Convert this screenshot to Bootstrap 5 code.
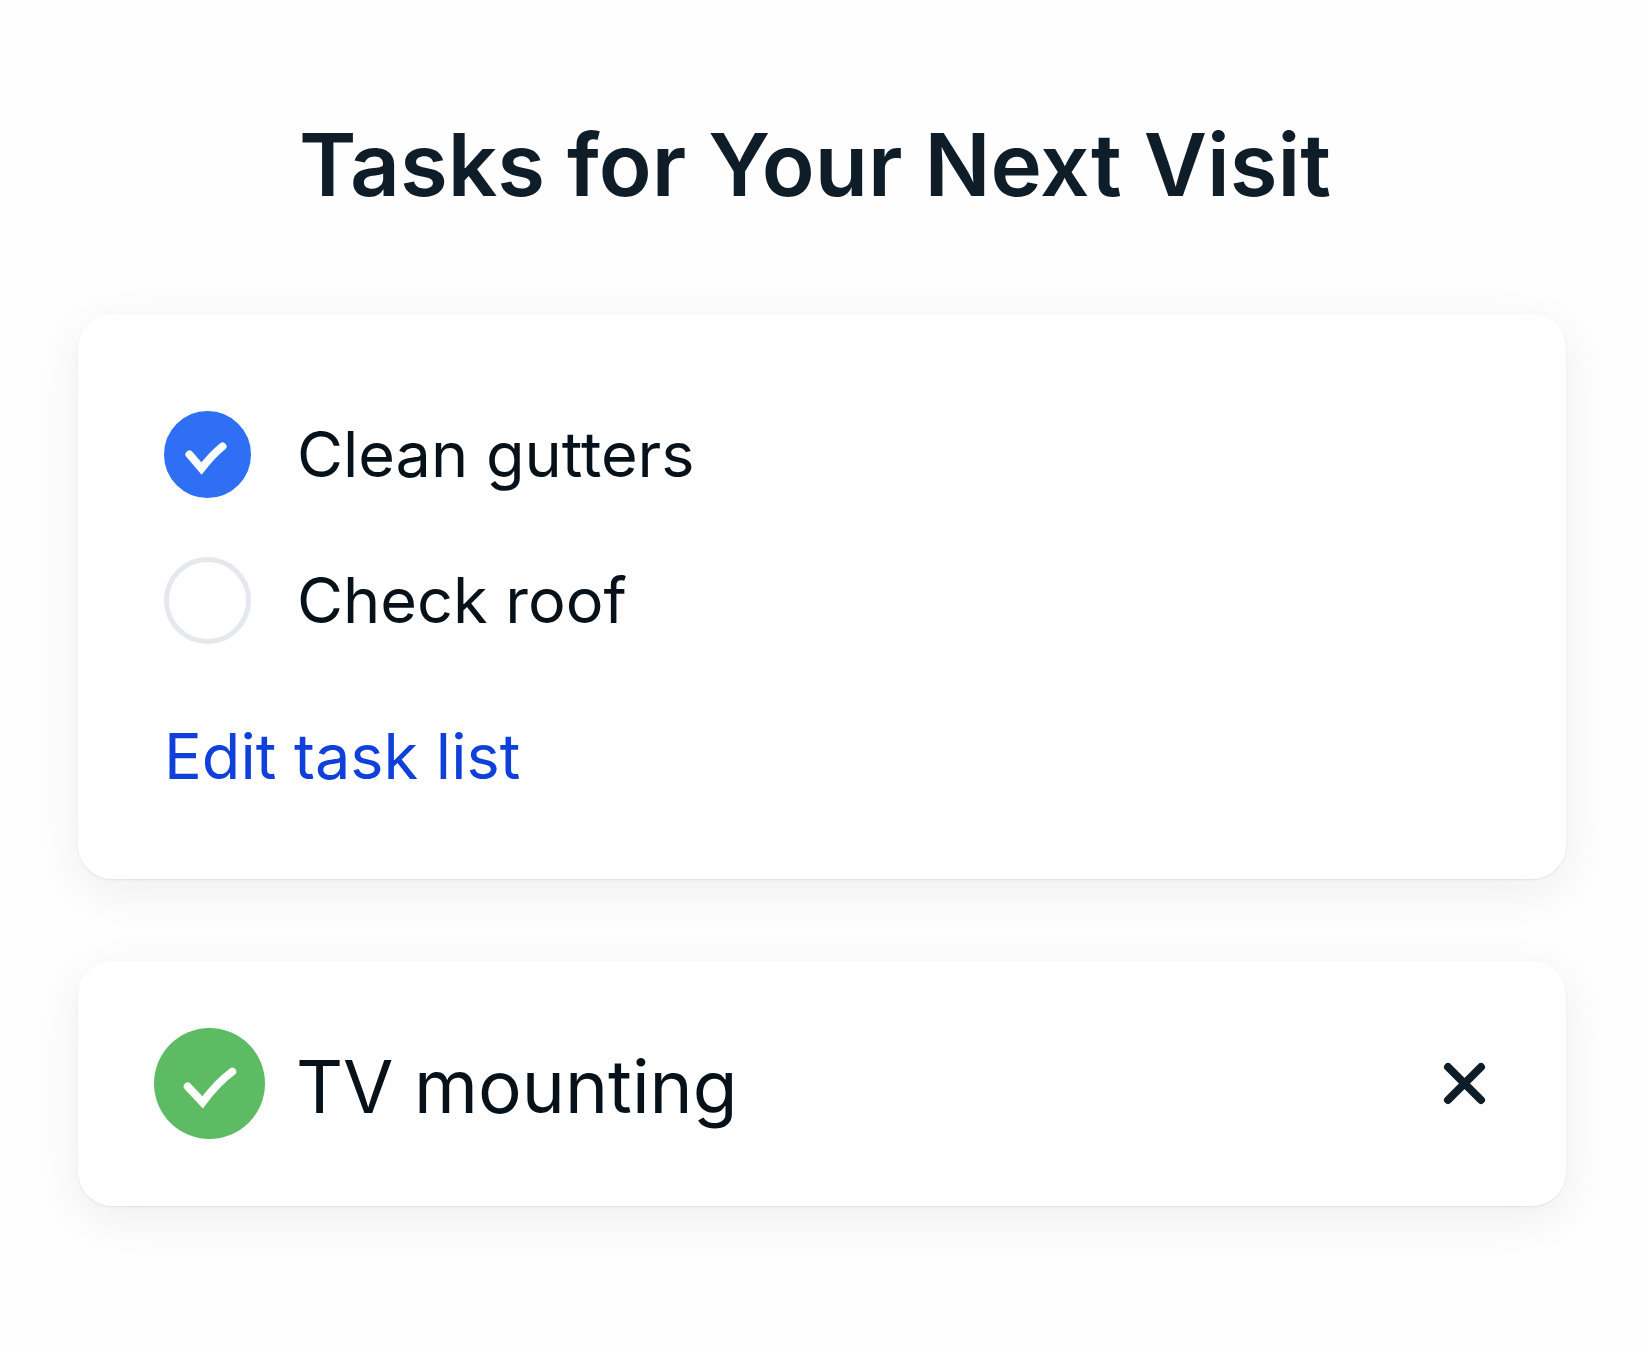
<!DOCTYPE html>
<html lang="en">
<head>
<meta charset="utf-8">
<meta name="viewport" content="width=device-width, initial-scale=1">
<title>Tasks for Your Next Visit</title>
<link href="https://cdn.jsdelivr.net/npm/bootstrap@5.3.0/dist/css/bootstrap.min.css" rel="stylesheet">
<style>
  body { font-family: Inter, "Liberation Sans", sans-serif; color: #07111a; background: #fefefe; }
  .visit-page { padding: 111px 82px 80px 78px; }
  .visit-title { font-size: 87px; line-height: 108px; font-weight: 640; color: #0f1d29; padding-right: 14px; margin-bottom: 95px; }
  .task-card { border: 0; border-radius: 34px; background: #fff;
    box-shadow: 0 1px 2px rgba(15, 23, 42, .08), 0 12px 48px rgba(15, 23, 42, .07); }
  .task-panel { padding: 96px 86px 87px; margin-bottom: 82px; }
  .task-rows { gap: 58px; margin-bottom: 76px; }
  .task-row { gap: 46px; }
  .task-label { font-size: 63px; line-height: 88px; }
  .task-check.form-check-input { width: 87px; height: 87px; margin: 0; border: 5px solid #e5e8ec; background-size: 88px 88px; background-position: center; }
  .task-check.form-check-input:checked { border-color: #2e6ff6; background-color: #2e6ff6;
    background-image: url("data:image/svg+xml,%3Csvg xmlns='http://www.w3.org/2000/svg' viewBox='0 0 88 88'%3E%3Cpath d='M26 44L38 58Q49 44 59 36' fill='none' stroke='%23fff' stroke-width='8' stroke-linecap='round' stroke-linejoin='miter'/%3E%3C/svg%3E"); }
  .edit-link { font-size: 63px; line-height: 72px; color: #1040da; }
  .done-card { padding: 67px 76px; }
  .done-row { gap: 31px; }
  .done-label { font-size: 73px; line-height: 88px; padding-top: 6px; }
  .close-btn { width: 50px; height: 50px; color: #0f1d29; }
</style>
</head>
<body>
<main class="visit-page">
  <h1 class="visit-title text-center">Tasks for Your Next Visit</h1>

  <section class="card task-card task-panel">
    <div class="task-rows d-flex flex-column">
      <div class="task-row d-flex align-items-center">
        <input class="form-check-input task-check rounded-circle flex-shrink-0" type="checkbox" id="gutters" checked>
        <label class="task-label" for="gutters">Clean gutters</label>
      </div>
      <div class="task-row d-flex align-items-center">
        <input class="form-check-input task-check rounded-circle flex-shrink-0" type="checkbox" id="roof">
        <label class="task-label" for="roof">Check roof</label>
      </div>
    </div>
    <a class="edit-link text-decoration-none align-self-start" href="#">Edit task list</a>
  </section>

  <section class="card task-card done-card">
    <div class="done-row d-flex align-items-center">
      <svg class="flex-shrink-0" width="111" height="111" viewBox="0 0 112 112" aria-hidden="true">
        <circle cx="56" cy="56" r="56" fill="#5dbb63"/>
        <path d="M34 59L49 75Q64 55 79 44" fill="none" stroke="#fff" stroke-width="8" stroke-linecap="round"/>
      </svg>
      <span class="done-label">TV mounting</span>
      <button class="close-btn btn p-0 border-0 ms-auto d-flex" type="button" aria-label="Remove TV mounting">
        <svg width="50" height="50" viewBox="0 0 50 50" aria-hidden="true">
          <path d="M8 8L41 41M41 8L8 41" fill="none" stroke="currentColor" stroke-width="8" stroke-linecap="round"/>
        </svg>
      </button>
    </div>
  </section>
</main>
<script src="https://cdn.jsdelivr.net/npm/bootstrap@5.3.0/dist/js/bootstrap.bundle.min.js"></script>
</body>
</html>
